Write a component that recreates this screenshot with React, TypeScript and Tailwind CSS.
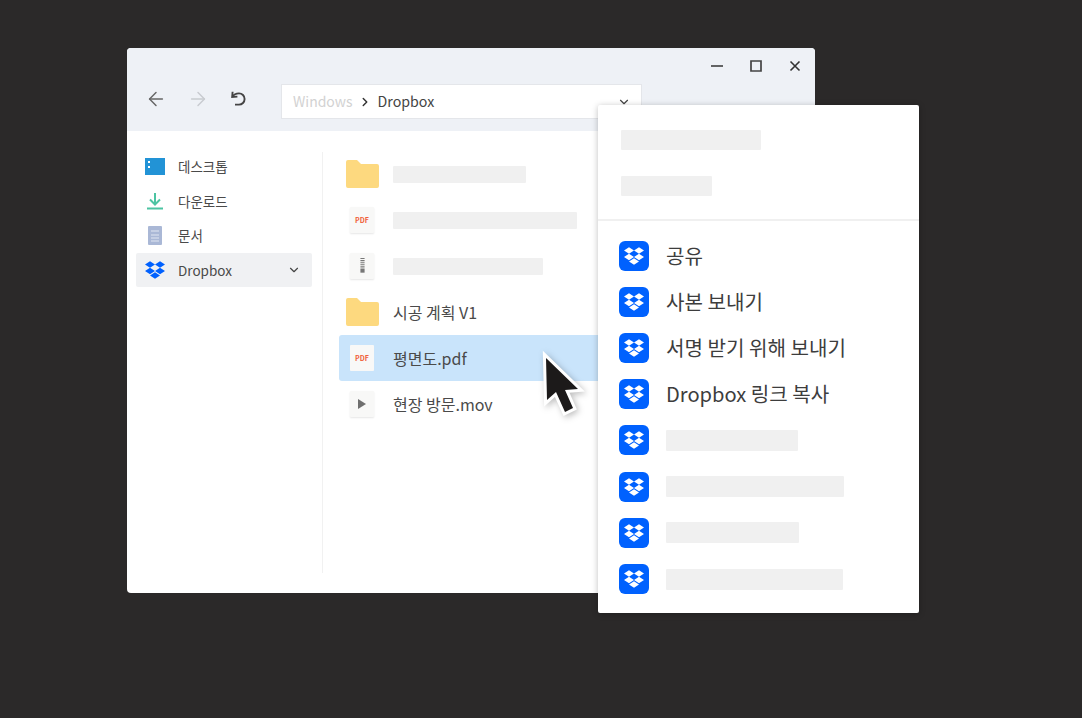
import { ArrowLeft, ArrowRight, ChevronDown, ChevronRight } from "lucide-react";

const font = { fontFamily: '"Noto Sans CJK KR", "Noto Sans", sans-serif' };
const DROPBOX = "M6 1.5 12 5.4 6 9.3 0 5.4zM18 1.5 24 5.4 18 9.3 12 5.4zM0 13.2 6 9.3 12 13.2 6 17.1zM18 9.3 24 13.2 18 17.1 12 13.2zM6 18.6 12 14.7 18 18.6 12 22.5z";

function Logo({ className, fill }: { className: string; fill: string }) {
  return (
    <svg viewBox="0 0 24 24" className={className} fill={fill}>
      <path d={DROPBOX} />
    </svg>
  );
}

function Folder() {
  return (
    <svg viewBox="0 0 33 28" className="w-[33px] h-[28px] shrink-0">
      <path d="M0 2a2 2 0 0 1 2-2h9l4 4h16a2 2 0 0 1 2 2v20a2 2 0 0 1-2 2H2a2 2 0 0 1-2-2z" fill="#fdd97f" />
    </svg>
  );
}

function Doc({ children, flat }: { children: React.ReactNode; flat?: boolean }) {
  return (
    <div className={`ml-[4px] mr-[5px] w-[24px] h-[26px] shrink-0 rounded-[1px] bg-[#f8f8f7] flex items-center justify-center ${flat ? "" : "shadow-[0_1px_2px_rgba(0,0,0,0.1)]"}`}>
      {children}
    </div>
  );
}

function PdfMark() {
  return <span className="text-[7px] leading-none font-bold text-[#f0603a]">PDF</span>;
}

function Bar({ w, h = "h-[17px]" }: { w: string; h?: string }) {
  return <div className={`${w} ${h} bg-[#f0f0f0] rounded-[1px]`} />;
}

function FileRow({ icon, children, active }: { icon: React.ReactNode; children: React.ReactNode; active?: boolean }) {
  return (
    <div className={`h-[46px] flex items-center pl-[7px] rounded-l-[3px] ${active ? "bg-[#c9e4fb]" : ""}`}>
      {icon}
      <div className="ml-[14px] text-[16px] text-[#4a4a4a] whitespace-nowrap">{children}</div>
    </div>
  );
}

function SideRow({ icon, label, active }: { icon: React.ReactNode; label: string; active?: boolean }) {
  return (
    <div className={`h-[34.5px] flex items-center rounded-[2px] ${active ? "bg-[#f0f1f3]" : ""}`}>
      <div className="w-[42px] flex justify-center pr-[5px]">{icon}</div>
      <span className="text-[13.5px] text-[#4a4a4a] whitespace-nowrap">{label}</span>
      {active && <ChevronDown className="ml-auto mr-[11px] w-[14px] h-[14px] text-[#444]" strokeWidth={2} />}
    </div>
  );
}

function MenuRow({ children }: { children: React.ReactNode }) {
  return (
    <div className="h-[46.2px] flex items-center pl-[21px]">
      <div className="w-[30px] h-[30px] rounded-[6px] bg-[#0061fe] flex items-center justify-center shrink-0">
        <Logo className="w-[20px] h-[20px]" fill="#ffffff" />
      </div>
      <div className="ml-[17px] text-[20.1px] leading-none text-[#3d3d3d] whitespace-nowrap">{children}</div>
    </div>
  );
}

export default function App() {
  return (
    <div className="w-[1082px] h-[718px] bg-[#2b2929] pt-[48px] pl-[127px] overflow-hidden" style={font}>
      <div className="relative w-[688px] h-[545px] bg-white rounded-[4px] flex flex-col">
        {/* title + toolbar */}
        <div className="h-[83px] bg-[#eef1f6] rounded-t-[4px] shrink-0">
          <div className="h-[36px] flex items-center justify-end pr-[14px] text-[#333]">
            <svg viewBox="0 0 12 12" className="w-[12px] h-[12px]" stroke="currentColor" strokeWidth="1.5">
              <path d="M0 6h12" />
            </svg>
            <svg viewBox="0 0 12 12" className="ml-[27px] w-[12px] h-[12px]" fill="none" stroke="#444" strokeWidth="1.7">
              <path d="M1 1h10v10H1z" />
            </svg>
            <svg viewBox="0 0 12 12" className="ml-[27px] w-[12px] h-[12px]" stroke="currentColor" strokeWidth="1.6">
              <path d="M1.5 1.5l9 9M10.5 1.5l-9 9" />
            </svg>
          </div>
          <div className="h-[35px] flex items-center pl-[18px]">
            <div className="flex items-center -mt-[5px]">
              <ArrowLeft className="w-[22px] h-[22px] text-[#666]" strokeWidth={1.6} />
              <ArrowRight className="ml-[20px] w-[22px] h-[22px] text-[#c8cbd0]" strokeWidth={1.6} />
              <svg viewBox="0 0 16 16" className="ml-[22px] w-[16px] h-[16px]" fill="none" stroke="#444" strokeWidth="1.9">
                <path d="M1.6 0.8 1.2 6 6.4 5.6" />
                <path d="M1.6 5.6C3 3.2 5.2 2.4 8 2.4a5.6 5.6 0 0 1 0 11.2H4" />
              </svg>
            </div>
            <div className="ml-[34px] w-[361px] h-[35px] bg-white border border-[#e4e6ea] flex items-center pl-[11px] text-[14px]">
              <span className="text-[#d2d2d2]">Windows</span>
              <ChevronRight className="ml-[5px] mr-[6px] w-[14px] h-[14px] text-[#333]" strokeWidth={2.5} />
              <span className="text-[#444] text-[14.2px]">Dropbox</span>
              <ChevronDown className="ml-auto mr-[10px] w-[14px] h-[14px] text-[#444]" strokeWidth={2} />
            </div>
          </div>
        </div>

        {/* body */}
        <div className="flex flex-1 min-h-0 pt-[21px] pb-[20px] pl-[9px]">
          <div className="w-[176px] shrink-0 -mt-[3px]">
            <SideRow
              label="데스크톱"
              icon={
                <div className="w-[20px] h-[17px] bg-[#2293d6] relative">
                  <div className="absolute left-[3px] top-[3px] w-[2px] h-[2px] bg-white" />
                  <div className="absolute left-[3px] top-[8px] w-[2px] h-[2px] bg-white" />
                </div>
              }
            />
            <SideRow
              label="다운로드"
              icon={
                <svg viewBox="0 0 18 18" className="w-[18px] h-[18px]" fill="none" stroke="#4cc4a2" strokeWidth="2">
                  <path d="M9 1v11M4 7.5 9 12.5l5-5M1 16.5h16" />
                </svg>
              }
            />
            <SideRow
              label="문서"
              icon={
                <svg viewBox="0 0 14 19" className="w-[14px] h-[19px]">
                  <rect width="14" height="19" rx="1" fill="#aab8d6" />
                  <path d="M3 5h8M3 9h8M3 12h8M3 15h8" stroke="#dfe5f1" strokeWidth="1.2" />
                </svg>
              }
            />
            <SideRow label="Dropbox" active icon={<Logo className="w-[20px] h-[20px]" fill="#0061fe" />} />
          </div>

          <div className="ml-[10px] w-px bg-[#f1f1f1]" />

          <div className="flex-1 pl-[16px] -mt-[1px]">
            <FileRow icon={<Folder />}><Bar w="w-[133px]" /></FileRow>
            <FileRow icon={<Doc><PdfMark /></Doc>}><Bar w="w-[184px]" /></FileRow>
            <FileRow
              icon={
                <Doc>
                  <svg viewBox="0 0 6 20" className="w-[5px] h-[18px]" fill="none" stroke="#777" strokeWidth="1.3">
                    <path d="M0.5 1h5M0.5 3.5h5M0.5 6h5M0.5 8.5h5M0.5 11h5" />
                    <rect x="0.5" y="13" width="5" height="5" fill="#777" stroke="none" />
                  </svg>
                </Doc>
              }
            >
              <Bar w="w-[150px]" />
            </FileRow>
            <FileRow icon={<Folder />}>시공 계획 V1</FileRow>
            <FileRow active icon={<Doc flat><PdfMark /></Doc>}>평면도.pdf</FileRow>
            <FileRow
              icon={
                <Doc>
                  <svg viewBox="0 0 8 10" className="w-[8px] h-[10px]" fill="#6f6f6f">
                    <path d="M0 0 8 5 0 10z" />
                  </svg>
                </Doc>
              }
            >
              현장 방문.mov
            </FileRow>
          </div>
        </div>

        {/* cursor */}
        <svg
          viewBox="0 0 50 80"
          className="absolute left-[410px] top-[295px] w-[50px] h-[80px] overflow-visible drop-shadow-[2px_2px_3px_rgba(0,0,0,0.25)]"
        >
          <path
            d="M9 15 10 57 19 49 28 69 36 65 28 47 41 46z"
            fill="#1c1a1a"
            stroke="#ffffff"
            strokeWidth="6"
            strokeLinejoin="miter"
            paintOrder="stroke"
          />
        </svg>

        {/* context menu */}
        <div className="absolute left-[471px] top-[57px] w-[321px] h-[508px] bg-white rounded-[2px] shadow-[0_1px_6px_rgba(0,0,0,0.25)]">
          <div className="h-[116px] pl-[23px] pt-[25px] border-b-[2px] border-[#f0f0f0] flex flex-col gap-[26px]">
            <Bar w="w-[140px]" h="h-[20px]" />
            <Bar w="w-[91px]" h="h-[20px]" />
          </div>
          <div className="pt-[11.6px]">
            <MenuRow>공유</MenuRow>
            <MenuRow>사본 보내기</MenuRow>
            <MenuRow>서명 받기 위해 보내기</MenuRow>
            <MenuRow>Dropbox 링크 복사</MenuRow>
            <MenuRow><Bar w="w-[132px]" h="h-[21px]" /></MenuRow>
            <MenuRow><Bar w="w-[178px]" h="h-[21px]" /></MenuRow>
            <MenuRow><Bar w="w-[133px]" h="h-[21px]" /></MenuRow>
            <MenuRow><Bar w="w-[177px]" h="h-[21px]" /></MenuRow>
          </div>
        </div>
      </div>
    </div>
  );
}
